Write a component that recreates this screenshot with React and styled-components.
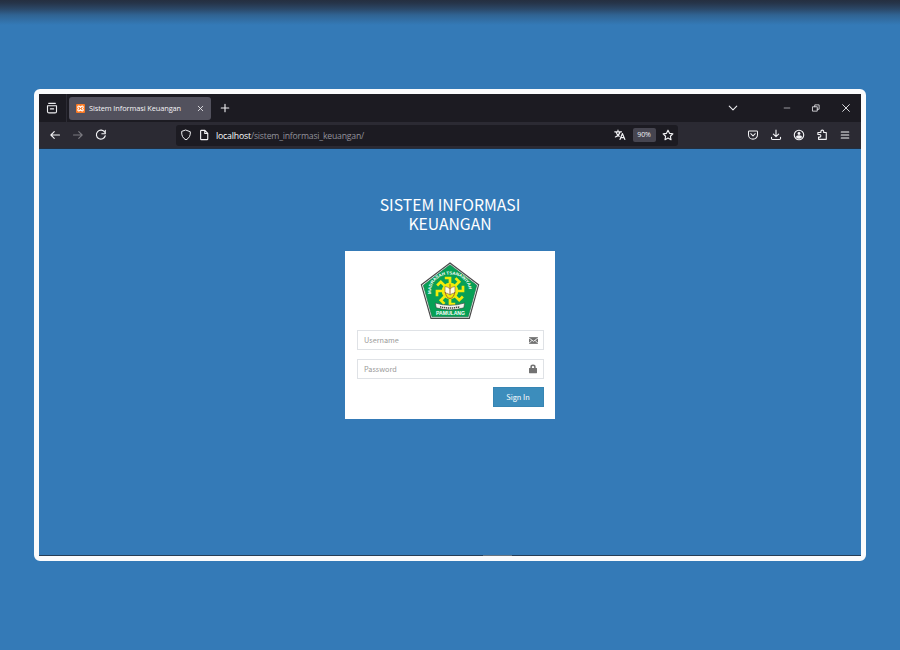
import React from "react";
import styled, { createGlobalStyle } from "styled-components";

const GlobalStyle = createGlobalStyle`
  *, *::before, *::after { box-sizing: border-box; }
  html, body { margin: 0; padding: 0; }
  body { background: #347ab7; overflow: hidden; }
`;

const Backdrop = styled.main`
  width: 900px;
  height: 650px;
  padding: 89px 34px;
  background:
    linear-gradient(to bottom, #252f40 0, #263449 3px, #2b4868 9px, #306392 15px, rgba(52, 122, 183, 0) 25px),
    #347ab7;
`;

const Browser = styled.section`
  display: flex;
  flex-direction: column;
  width: 832px;
  height: 472px;
  border: 5px solid #fafbfc;
  border-radius: 6px;
  background: #347ab7;
  font-family: "Open Sans", "Noto Sans", sans-serif;
`;

const TabStrip = styled.header`
  display: flex;
  align-items: center;
  flex: 0 0 28px;
  background: #1c1b22;
  color: #ededf0;
`;

const FirefoxView = styled.div`
  display: flex;
  align-items: center;
  justify-content: center;
  width: 28px;
  height: 28px;
  padding-right: 1px;
  border-right: 1px solid #2c2b34;
`;

const Tab = styled.div`
  display: flex;
  align-items: center;
  width: 142px;
  height: 23px;
  margin-left: 2px;
  padding: 0 6px 0 7px;
  border-radius: 3px;
  background: #52515d;
`;

const TabTitle = styled.span`
  flex: 1;
  margin-left: 4px;
  color: #f4f4f7;
  font-size: 7.4px;
  line-height: 12px;
  letter-spacing: -0.09px;
  white-space: nowrap;
`;

const Controls = styled.div`
  display: flex;
  align-items: center;
  gap: ${(p) => p.$gap || 0}px;
  margin-left: ${(p) => p.$before || 0}px;
`;

const Toolbar = styled.nav`
  display: flex;
  align-items: center;
  flex: 0 0 27px;
  border-bottom: 1px solid #202f42;
  background: #2b2a33;
  color: #f3f3f6;
`;

const AddressBar = styled.div`
  display: flex;
  align-items: center;
  width: 502px;
  height: 21px;
  margin-left: 69.5px;
  padding: 0 4px 0 4px;
  border-radius: 3px;
  background: #1c1b22;
`;

const Address = styled.span`
  flex: 1;
  margin-left: 6px;
  padding-top: 1px;
  color: #92929b;
  font-size: 8.7px;
  line-height: 14px;
  letter-spacing: -0.21px;
  white-space: nowrap;
`;

const Host = styled.span`
  color: #fbfbfe;
  font-weight: 500;
  letter-spacing: -0.16px;
`;

const Zoom = styled.span`
  width: 23px;
  height: 14px;
  margin: 0 6.5px 0 7px;
  border-radius: 2px;
  background: #464550;
  color: #f0f0f4;
  font-size: 7px;
  line-height: 14px;
  letter-spacing: -0.1px;
  text-align: center;
`;

const Glyph = styled.svg`
  display: block;
  flex: none;
  width: ${(p) => p.$size || 12}px;
  height: ${(p) => p.$size || 12}px;
  opacity: ${(p) => p.$opacity || 1};
  fill: none;
  stroke: currentColor;
  stroke-width: 1.5;
  stroke-linecap: round;
  stroke-linejoin: round;
`;

const Page = styled.div`
  display: flex;
  flex: 1;
  flex-direction: column;
  align-items: center;
  padding-top: 46px;
  font-family: "Noto Sans CJK SC", "Noto Sans CJK JP", sans-serif;
`;

const TaskbarEdge = styled.div`
  flex: none;
  height: 1px;
  padding-left: 444px;
  background: #263d55;
`;

const TaskbarHighlight = styled.div`
  width: 29px;
  height: 1px;
  background: #66737f;
`;

const Title = styled.h1`
  width: 210px;
  margin: 0 0 18px;
  color: #fff;
  font-size: 15.75px;
  font-weight: 400;
  line-height: 19px;
  text-align: center;
`;

const LoginCard = styled.form`
  display: flex;
  flex-direction: column;
  width: 210px;
  height: 168px;
  padding: 11px 11.5px 12px 11.5px;
  background: #fff;
`;

const Crest = styled.svg`
  display: block;
  width: 60px;
  height: 58px;
  margin: 0 auto 10px 63px;
`;

const CrestText = styled.text`
  fill: #fff;
  font-family: "Liberation Sans", Arial, sans-serif;
  font-weight: 700;
`;

const Field = styled.label`
  display: flex;
  align-items: center;
  flex: none;
  height: 20px;
  margin-bottom: 9px;
  padding: 0 5px 0 6.5px;
  border: 1px solid #dfe2e6;
  color: #727272;
`;

const Input = styled.input`
  flex: 1;
  min-width: 0;
  height: 18px;
  padding: 0;
  border: 0;
  outline: 0;
  background: transparent;
  color: #555;
  font: 400 7.3px/18px "Noto Sans CJK SC", sans-serif;
  &::placeholder { color: #999; opacity: 1; }
`;

const SignIn = styled.button`
  align-self: flex-end;
  width: 51px;
  height: 20px;
  margin-top: -1px;
  padding: 0;
  border: 1px solid #3785b3;
  background: #3c8dbc;
  color: #fff;
  font: 400 7.4px/18px "Noto Sans CJK SC", sans-serif;
`;

function Icon({ children, ...rest }) {
  return <Glyph viewBox="0 0 16 16" aria-hidden="true" {...rest}>{children}</Glyph>;
}

const ARMS = [0, 45, 90, 135, 180, 225, 270, 315];

function SchoolCrest() {
  return (
    <Crest viewBox="0 0 60 58" role="img">
      <defs>
        <path id="crestArc" d="M11.2 32 C8.5 6 51.5 6 48.8 32" />
      </defs>
      <path d="M30 1 L58.6 22.8 L49.3 56.3 H11 L1.4 22.8Z" fill="#fff" stroke="#494949" strokeWidth="1.2" />
      <path d="M30 2.7 L56.8 23.3 L48.2 54.8 H12 L3.3 23.3Z" fill="#07a055" stroke="#176c43" strokeWidth=".6" />
      <CrestText fontSize="4.3">
        <textPath href="#crestArc" textLength="57" lengthAdjust="spacingAndGlyphs">MADRASAH TSANAWIYAH</textPath>
      </CrestText>
      <g fill="none" stroke="#f2ed09" strokeWidth="2.7">
        {ARMS.map((a) => (
          <path key={a} d="M30 25 V16 H24.8" transform={`rotate(${a} 30 29)`} />
        ))}
      </g>
      <circle cx="30" cy="29" r="8.3" fill="#f2ed09" />
      <path d="M25 24.5 Q28.2 24.8 30 27 Q31.8 24.8 35 24.5 V31 Q32 31 30 33 Q28 31 25 31Z" fill="#fffbe6" stroke="#8e7448" strokeWidth=".7" />
      <path d="M30 21.8 V33 M25.3 30 Q26 36 30 36.5 Q34 36 34.7 30" fill="none" stroke="#a7652e" strokeWidth="1" />
      <path d="M15.3 41 Q30 45.5 44.7 41 L43.8 45.8 Q30 50 16.2 45.8Z" fill="#f5f5ed" stroke="#3c554a" strokeWidth=".7" />
      <path d="M20 44.7 Q30 47.4 40 44.7" fill="none" stroke="#444" strokeWidth="1.5" strokeDasharray="1.3 .7" />
      <CrestText x="16" y="53.2" fontSize="4.5" textLength="29" lengthAdjust="spacingAndGlyphs">PAMULANG</CrestText>
    </Crest>
  );
}

export default function App() {
  return (
    <>
      <GlobalStyle />
      <Backdrop>
        <Browser>
          <TabStrip>
            <FirefoxView>
              <Icon $size={12}><path d="M3.5 1.8h9M2 5h12v7.5a2 2 0 0 1-2 2H4a2 2 0 0 1-2-2zM5.8 9.2h4.4" /></Icon>
            </FirefoxView>
            <Tab>
              <Glyph viewBox="0 0 16 16" $size={9}>
                <rect width="16" height="16" rx="2" fill="#fb7a24" stroke="none" />
                <path d="M8 6.3C6.5 2.5 2.3 3.3 3.3 6.3L4.8 8 3.3 9.7c-1 3 3.2 3.8 4.7 0 1.5 3.8 5.7 3 4.7 0L11.2 8l1.5-1.7c1-3-3.2-3.8-4.7 0z" stroke="#fff" strokeWidth="2" />
              </Glyph>
              <TabTitle>Sistem Informasi Keuangan</TabTitle>
              <Icon $size={9}><path d="m4 4 8 8M12 4l-8 8" /></Icon>
            </Tab>
            <Controls $before={8}><Icon><path d="M8 3v10M3 8h10" /></Icon></Controls>
            <Controls $before={496}><Icon><path d="m3 5.5 5 5 5-5" /></Icon></Controls>
            <Controls $before={43} $gap={19}>
              <Icon $size={10} $opacity={0.65}><path d="M3.5 8h9" /></Icon>
              <Icon $size={10}><path d="M3 6h7v7H3zM6 6V3h7v7h-3" strokeWidth="1.3" /></Icon>
              <Icon $size={12}><path d="m3.5 3.5 9 9M12.5 3.5l-9 9" strokeWidth="1.2" /></Icon>
            </Controls>
          </TabStrip>

          <Toolbar>
            <Controls $before={9.5} $gap={11}>
              <Icon><path d="M14 8H2.5M7 3.5 2.5 8 7 12.5" /></Icon>
              <Icon $opacity={0.4}><path d="M2 8h11.5M9 3.5 13.5 8 9 12.5" /></Icon>
              <Icon><path d="M13 4.4A6 6 0 1 0 13.7 9M13.7 1.7v4.6H9.1" /></Icon>
            </Controls>
            <AddressBar>
              <Icon><path d="m8 1.5 5.8 2.2c.3 4.9-1.4 8.5-5.8 10.8-4.4-2.3-6.1-5.9-5.8-10.8z" strokeWidth="1.3" /></Icon>
              <Controls $before={6}>
                <Icon><path d="M4.5 1.8h4.7l3.8 4v7.4a1 1 0 0 1-1 1H4.5a1 1 0 0 1-1-1V2.8a1 1 0 0 1 1-1zM9 2v4h4" /></Icon>
              </Controls>
              <Address><Host>localhost</Host>/sistem_informasi_keuangan/</Address>
              <Icon><path d="M1 3.8h9M5.3 1.5v2.3M2.7 3.8c.8 3 2.5 5 4.3 6M8 4c-.8 3-3 5.4-6.2 6.7M8 14l3.2-8 3.3 8M9 11.5h4.3" /></Icon>
              <Zoom>90%</Zoom>
              <Icon><path d="m8 1.6 2 4.2 4.5.7-3.3 3.2.8 4.6L8 12.1l-4 2.2.8-4.6-3.3-3.2L6 5.8z" /></Icon>
            </AddressBar>
            <Controls $before={68.5} $gap={11.2}>
              <Icon><path d="M3.2 2.6h9.6a1.2 1.2 0 0 1 1.2 1.2V7.5a6 6 0 0 1-12 0V3.8a1.2 1.2 0 0 1 1.2-1.2zM5 6.3l3 2.9 3-2.9" strokeWidth="1.35" /></Icon>
              <Icon><path d="M8 1.5V10M4.5 6.7 8 10.2l3.5-3.5M2 11v1.5a1.5 1.5 0 0 0 1.5 1.5h9a1.5 1.5 0 0 0 1.5-1.5V11" /></Icon>
              <Icon>
                <circle cx="8" cy="8" r="6.3" />
                <circle cx="8" cy="6" r="1.9" fill="currentColor" stroke="none" />
                <path d="M4 11a4 2.8 0 0 1 8 0 5 5 0 0 1-8 0z" fill="currentColor" stroke="none" />
              </Icon>
              <Icon><path d="M6.5 4.7V3.4a1.9 1.9 0 0 1 3.8 0v1.3H13.7v9.1H3.4v-3h1.4a1.7 1.7 0 0 0 0-3.4H2.5V4.7z" /></Icon>
              <Icon><path d="M3 4h10M3 8h10M3 12h10" /></Icon>
            </Controls>
          </Toolbar>

          <Page>
            <Title>SISTEM INFORMASI KEUANGAN</Title>
            <LoginCard onSubmit={(e) => e.preventDefault()}>
              <SchoolCrest />
              <Field>
                <Input type="text" placeholder="Username" />
                <Glyph viewBox="0 0 16 16" $size={9}>
                  <path d="M0 2h16v12H0z" fill="currentColor" stroke="none" />
                  <path d="m0 3.5 8 6 8-6M0 13l5-5M16 13l-5-5" stroke="#fff" strokeWidth="1.5" />
                </Glyph>
              </Field>
              <Field>
                <Input type="password" placeholder="Password" />
                <Icon $size={10}>
                  <path d="M5 7V4.6C5 1.2 11 1.2 11 4.6V7" strokeWidth="2.5" />
                  <rect x="1.6" y="6.2" width="12.8" height="8.6" rx=".7" fill="currentColor" stroke="none" />
                </Icon>
              </Field>
              <SignIn type="submit">Sign In</SignIn>
            </LoginCard>
          </Page>
          <TaskbarEdge><TaskbarHighlight /></TaskbarEdge>
        </Browser>
      </Backdrop>
    </>
  );
}
